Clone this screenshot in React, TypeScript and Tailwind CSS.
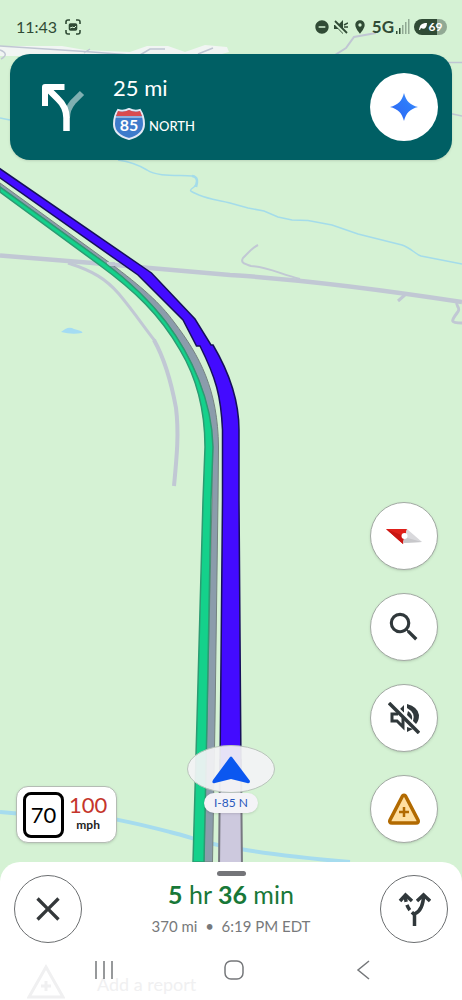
import type { ReactNode } from 'react';
import { MdClose, MdDoNotDisturbOn, MdLocationOn, MdSearch } from 'react-icons/md';

interface RoundButtonProps {
  label: string;
  className?: string;
  children: ReactNode;
}

function RoundButton({ label, className = '', children }: RoundButtonProps) {
  return (
    <button
      type="button"
      aria-label={label}
      className={`flex size-[68px] shrink-0 items-center justify-center rounded-full bg-white ${className}`}
    >
      {children}
    </button>
  );
}

function MapCanvas() {
  return (
    <svg
      className="absolute inset-0 h-full w-full"
      viewBox="0 0 462 1000"
      preserveAspectRatio="xMidYMid slice"
      fill="none"
      aria-hidden="true"
    >
      <rect width="462" height="1000" fill="#d5f2d4" />

      {/* Built-up area behind the banner */}
      <path d="M0 46 L62 46 L85 50 L130 52 L147 46 L168 46 L185 52 L205 45 L227 47 L229 52 L215 56 L0 56Z" fill="#f1f5f3" />
      <g stroke="#c0c6d3" strokeWidth="1.5">
        <path d="M0 46 L92 52 L130 55 M84 53 L90 49 M140 55 L150 49 L165 49 M198 54 L213 48" />
        <path d="M0 50 Q10 54 1 59" />
        <path d="M335 55 L346 48 L354 37 L376 33" strokeWidth="2" />
        <path d="M448 62.500 H462 M448 113 L462 116" />
      </g>

      {/* Water */}
      <g stroke="#a4dcea" strokeWidth="1.500">
        <path d="M0 118 L10 120 M118 160 C132 162 139 165 147 170 C157 177 178 175 192 176 C198 177 198 183 194 187 C188 191 190 191 199 195 C211 200 220 200 230 203 L248 208 L264 211 L278 217 L292 220 L308 220.500 L332 225 L358 234 L402 245 C411 248 415 254 421 256 L462 264" />
        <path d="M192 176 C199 177 197 183 196 187" strokeWidth="2.500" />
      </g>
      <path d="M61 332 C65 329 69 326 74 329 C79 330 84 332 82 333 Q72 335 61 332Z" fill="#a4dcf3" />
      <path d="M0 812 L17 813.500 C70 806 135 823 170 832 C195 838 204 844 240 849 Q280 856 350 862" stroke="#a6dcee" strokeWidth="4" />

      {/* Side roads */}
      <g stroke="#c1c8d4">
        <path d="M68 263 C93 271 106 279 119 294 C134 312 144 327 155 341" strokeWidth="3" />
        <path d="M154 340 C164 358 172 386 176 408 C179 432 177 455 174 486" strokeWidth="4" />
        <path d="M258 245 C252 248 248 253 243 258 C240 263 245 264 251 266 C267 267 278 273 300 279" strokeWidth="2" />
        <path d="M406 294 L398 301 M457 302 C455 307 462 307 457 313 C451 321 450 323 462 323" strokeWidth="3" />
        <path d="M0 255.500 C80 262 140 267 230 275 C310 280 390 291 462 302" strokeWidth="4.500" />
      </g>

      {/* Opposite carriageway */}
      <path
        d="M0 183 L110 263 C142 287 160 303 174 322 C200 356 218 390 218.500 447 L218 500 L215 720 L212.500 862 L204 862 L207 720 L212 500 L212 447 C212 400 191 355 166 322 C150 301 130 282 105 263 L0 187Z"
        fill="#8b9cab"
        stroke="#74827f"
      />
      <path d="M107 264 L115 264" stroke="#c1c8d4" strokeWidth="4" />
      <path
        d="M0 192 L98 264 C135 291 160 315 180 350 C198 380 205 415 205 447 L203 500 L197 720 L193 862 L204 862 L207 720 L211 500 L213 447 C212 400 191 355 166 322 C150 301 130 282 105 263 L0 187Z"
        fill="#14d18b"
        stroke="#2c9b72"
        strokeWidth="1.500"
      />

      {/* Road ahead, with the route on top of it */}
      <path d="M220 760 H241 L242 870 H219Z" fill="#cdc9de" stroke="#777881" strokeWidth="2" />
      <path
        d="M-4 166 L151.500 273 L195 319 L211 345 L213 345 C229 372 239 400 239 430 L239 500 L241 770 L220 770 L222.500 500 L222.500 430 C221 396 216 378 200 346 L196.500 346 L183 320 L138 275 L-4 175Z"
        fill="#430bff"
        stroke="#16105a"
        strokeWidth="1.500"
      />

      {/* Current position */}
      <ellipse cx="231" cy="769" rx="43.500" ry="23.500" fill="#f3f3f5" fillOpacity="0.930" stroke="#b9c4bb" />
      <path d="M230 757 Q231 756 232 757 L250 781 Q250 784 247 783 L231 779 L215 783 Q211 784 213 780Z" fill="#0b57f0" />
    </svg>
  );
}

function StatusBar() {
  return (
    <header className="flex h-[53px] items-center justify-between pr-[15px] pl-4 text-[#304b35]">
      <div className="flex items-center gap-2">
        <span className="text-base leading-5">11:43</span>
        <svg viewBox="0 0 16 16" className="size-4" fill="none" stroke="currentColor" strokeWidth="1.600" aria-hidden="true">
          <path d="M1 5V3Q1 1 3 1H5M11 1H13Q15 1 15 3V5M15 11V13Q15 15 13 15H11M5 15H3Q1 15 1 13V11" />
          <rect x="4.500" y="5" width="7" height="6" rx="1" fill="currentColor" />
          <path d="M5 9 L8 8 L9 9 L11 7" stroke="#d5f2d4" strokeWidth="1" />
        </svg>
      </div>
      <div className="flex items-center gap-1">
        <MdDoNotDisturbOn className="size-4" />
        <svg viewBox="0 0 14 14" className="size-[14px]" fill="currentColor" aria-hidden="true">
          <path d="M0 5 H4 L9 0 V14 L4 9 H0Z" />
          <path d="M10 5 L14 3 M10 7 H14" stroke="currentColor" strokeWidth="1.500" />
          <path d="M0 2 L12 14" stroke="#d5f2d4" strokeWidth="3" />
          <path d="M1 1 L13 13" stroke="currentColor" strokeWidth="1.800" />
        </svg>
        <MdLocationOn className="size-4" />
        <div className="flex items-center gap-[2px]">
          <span className="text-[17px] leading-5 font-bold">5G</span>
          <svg viewBox="0 0 14 15" className="h-[15px] w-[14px]" fill="#304b35" aria-hidden="true">
            <path d="M0 12h1.500v3H0zM3 9h1.500v6H3z" />
            <path d="M6 6h1.500v9H6zM9 3h1.500v12H9zM12 0h1.500v15H12z" fill="#91a994" />
          </svg>
        </div>
        <span className="flex h-4 w-[33px] items-center justify-center gap-[2px] rounded-full bg-linear-to-r from-[#304b35] from-69% to-[#91a994] to-69% text-xs leading-4 font-bold text-white">
          <svg viewBox="0 0 8 7" className="h-[7px] w-2" fill="currentColor" aria-hidden="true">
            <path d="M0 7C1 2 2 0 8 0C8 5 5 7 2 5L1 7Z" />
          </svg>
          69
        </span>
      </div>
    </header>
  );
}

function DirectionBanner() {
  return (
    <section className="mx-[10px] mt-px flex h-[106px] items-center rounded-[20px] bg-[#005f64] pr-[14px] pl-8 shadow-sm">
      <svg viewBox="0 0 44 48" className="h-12 w-11 shrink-0" fill="none" strokeWidth="6.500" aria-hidden="true">
        <path d="M40 10 L31 19 Q25 26 25 35" stroke="#7fb0b2" strokeWidth="6" />
        <path d="M4 4 L16 16 Q24.500 24 24.500 35 V48" stroke="#fff" />
        <path d="M3 23 V4 H22.500" stroke="#fff" strokeWidth="6" strokeLinejoin="round" />
      </svg>
      <div className="ml-[27px] flex-1 text-white">
        <p className="text-[22px] leading-7">25 mi</p>
        <div className="mt-[6px] flex items-center gap-1">
          <div className="relative h-8 w-8">
            <svg viewBox="0 0 32 32" className="h-8 w-8" aria-hidden="true">
              <path d="M5 2 Q10 4 16 1 Q22 4 27 2 Q31 8 31 16 Q31 27 16 31 Q1 27 1 16 Q1 8 5 2Z" fill="#3e7bcb" stroke="#e2e9f5" strokeWidth="2" />
              <path d="M5 3 Q10 5 16 2 Q22 5 27 3 L29 8 H3Z" fill="#d94b4f" />
              <path d="M2 9H30" stroke="#e2e9f5" />
            </svg>
            <span className="absolute inset-x-0 top-[9px] text-center text-base leading-4 font-bold">85</span>
          </div>
          <span className="pt-1 text-[13px] leading-5 font-medium">NORTH</span>
        </div>
      </div>
      <RoundButton label="Ask assistant">
        <svg viewBox="0 0 28 28" className="size-7" aria-hidden="true">
          <defs>
            <linearGradient id="spark" x1="0" y1="1" x2="1" y2="0">
              <stop stopColor="#3264f2" />
              <stop offset="0.600" stopColor="#2c7bfa" />
              <stop offset="1" stopColor="#629cf6" />
            </linearGradient>
          </defs>
          <path d="M14 0 C16 8 20 12 28 14 C20 16 16 20 14 28 C12 20 8 16 0 14 C8 12 12 8 14 0Z" fill="url(#spark)" />
        </svg>
      </RoundButton>
    </section>
  );
}

function SpeedLimit() {
  return (
    <div className="flex h-[57px] w-[101px] items-center gap-[5px] rounded-xl border border-[#b4bcb4] bg-white pl-[6px] shadow-sm">
      <div className="flex h-[46px] w-[41px] items-center justify-center rounded-lg border-3 border-black text-[22px] leading-7 text-black">
        70
      </div>
      <div className="flex flex-col items-center pb-1">
        <span className="text-[22px] leading-6 text-[#c5352c]">100</span>
        <span className="text-xs leading-4 font-bold text-[#222]">mph</span>
      </div>
    </div>
  );
}

const floating = 'border border-[#a3aaa4] shadow-sm';

function MapControls() {
  return (
    <div className="flex flex-col gap-[23px]">
      <RoundButton label="Compass" className={floating}>
        <svg viewBox="0 0 38 16" className="h-4 w-[38px]" aria-hidden="true">
          <path d="M1 1 L22 1 L18 16Z" fill="#df201a" />
          <path d="M1 1 L19 8 L18 16Z" fill="#c91512" />
          <path d="M22 1 L37 14 L18 15Z" fill="#d9d9dc" />
          <path d="M19 9 L37 14 L18 15Z" fill="#c7c7ca" />
          <circle cx="19.500" cy="8" r="3" fill="#fff" />
        </svg>
      </RoundButton>
      <RoundButton label="Search along route" className={floating}>
        <MdSearch className="size-[38px] text-[#30383b]" />
      </RoundButton>
      <RoundButton label="Unmute" className={floating}>
        <svg viewBox="0 0 32 32" className="size-8" fill="none" stroke="#30383b" strokeWidth="3" aria-hidden="true">
          <path d="M10 12 H4 V19 H9 L15 25 V16" />
          <path d="M12 7 L16 3 V11Z M19 2 Q30 5 31 13 Q31 19 28 22 L25 19 Q28 11 19 6Z M20 9 Q25 12 24 18 L19 13Z M19 25 L25 27 L19 30Z" fill="#30383b" stroke="none" />
          <path d="M3 0 L32 29" stroke="#fff" strokeWidth="3" />
          <path d="M1 1 L31 31" strokeWidth="3.500" />
        </svg>
      </RoundButton>
      <RoundButton label="Report an incident" className={floating}>
        <svg viewBox="0 0 34 32" className="h-8 w-[34px]" fill="#ffdfa0" stroke="#b26a00" strokeWidth="3.500" strokeLinejoin="round" aria-hidden="true">
          <path d="M15.500 3 Q17 1.500 18.500 3 L31 27 Q32 30 29 30 H5 Q2 30 3 27Z" />
          <path d="M17 14 V24 M12 19 H22" strokeWidth="2.500" />
        </svg>
      </RoundButton>
    </div>
  );
}

function TripSheet() {
  return (
    <footer className="relative h-[138px] overflow-hidden rounded-t-[20px] bg-white">
      <div className="flex h-[81px] items-start justify-between px-[14px] pt-[13px]">
        <RoundButton label="Close navigation" className="border border-[#6b6e70]">
          <MdClose className="size-10 text-[#34383a]" />
        </RoundButton>
        <div className="-mt-1 flex flex-1 flex-col items-center">
          <span className="h-[5px] w-[29px] rounded-full bg-[#747579]" />
          <p className="mt-[2px] text-[25px] leading-8 whitespace-nowrap text-[#187838]">
            <b>5</b> hr <b>36</b> min
          </p>
          <p className="mt-1 text-[15px] leading-6 whitespace-nowrap text-[#77797b]">370 mi&nbsp; •&nbsp; 6:19 PM EDT</p>
        </div>
        <RoundButton label="Alternate routes" className="border border-[#6b6e70]">
          <svg viewBox="0 0 33 34" className="h-[34px] w-[33px]" fill="none" stroke="#30383b" strokeWidth="3.500" aria-hidden="true">
            <path d="M2 9 L7.500 3 L14 9 M19 9 L25.500 3 L32 9" />
            <path d="M16.500 34 V22 Q25.500 18 25.500 3" />
            <path d="M7.500 4 Q7.500 16 16 22" strokeDasharray="6 3" />
          </svg>
        </RoundButton>
      </div>

      {/* System navigation sits over the collapsed part of the sheet */}
      <div className="grid">
        <div className="col-start-1 row-start-1 flex items-end gap-8 pt-[21px] pl-[27px] text-[#f0f0f1]">
          <svg viewBox="0 0 38 36" className="h-9 w-[38px]" fill="none" stroke="currentColor" strokeWidth="3" aria-hidden="true">
            <path d="M19 3 L36 33 H2Z M19 17 V27 M14 22 H24" />
          </svg>
          <span className="text-lg leading-8">Add a report</span>
        </div>
        <nav className="col-start-1 row-start-1 flex h-[54px] items-center justify-between pr-[87px] pl-[92px] text-[#75777a]">
          <button type="button" aria-label="Recent apps" className="flex w-6 justify-center">
            <svg viewBox="0 0 24 20" className="h-5 w-6" stroke="currentColor" strokeWidth="1.500" aria-hidden="true">
              <path d="M4 1V19M12 1V19M20 1V19" />
            </svg>
          </button>
          <button type="button" aria-label="Home" className="flex w-6 justify-center">
            <svg viewBox="0 0 20 20" className="size-5" fill="none" stroke="currentColor" strokeWidth="1.500" aria-hidden="true">
              <rect x="1" y="1" width="18" height="18" rx="6" />
            </svg>
          </button>
          <button type="button" aria-label="Back" className="flex w-6 justify-center">
            <svg viewBox="0 0 14 20" className="h-5 w-[14px]" fill="none" stroke="currentColor" strokeWidth="1.500" aria-hidden="true">
              <path d="M13 1 L2 10 L13 19" />
            </svg>
          </button>
        </nav>
      </div>
    </footer>
  );
}

export default function App() {
  return (
    <div className="relative flex min-h-screen flex-col overflow-hidden bg-[#d5f2d4] font-['Lato',sans-serif]">
      <MapCanvas />
      <div className="relative flex flex-1 flex-col">
        <StatusBar />
        <DirectionBanner />
        <main className="relative flex flex-1 items-end justify-between pr-6 pb-[19px] pl-4">
          <SpeedLimit />
          <span className="absolute bottom-[49px] left-1/2 -translate-x-1/2 rounded-full bg-[#f4f3f7] px-[10px] text-xs leading-5 whitespace-nowrap text-[#2858bd] shadow-sm">
            I-85 N
          </span>
          <MapControls />
        </main>
        <TripSheet />
      </div>
    </div>
  );
}
